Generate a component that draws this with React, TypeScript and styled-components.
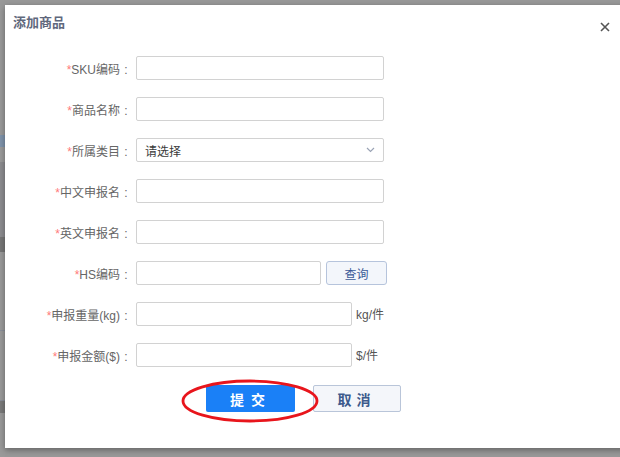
import styled, { createGlobalStyle } from 'styled-components';

const Global = createGlobalStyle`
  html, body {
    margin: 0;
    padding: 0;
    background: #989898;
    overflow: hidden;
  }
  body {
    font-family: "Liberation Sans", "Noto Sans CJK SC", sans-serif;
    font-size: 12px;
  }
`;

const Screen = styled.div`
  display: flex;
  width: 620px;
  height: 457px;
  padding-top: 5px;
  box-sizing: border-box;
  overflow: hidden;
`;

// strip of the page behind the dimmed overlay
const PageEdge = styled.div`
  width: 5px;
  flex: none;
  display: flex;
  flex-direction: column;
`;

const Band = styled.div<{ $h: number; $bg: string }>`
  height: ${(p) => p.$h}px;
  background: ${(p) => p.$bg};
  flex: none;
`;

const Modal = styled.div`
  width: 625px;
  height: 443px;
  flex: none;
  background: #fff;
  box-shadow: 0 2px 6px rgba(0, 0, 0, 0.35);
  display: flex;
  flex-direction: column;
`;

const Header = styled.div`
  height: 40px;
  display: flex;
  align-items: flex-start;
  justify-content: space-between;
  padding: 8px 0 0 8px;
  box-sizing: border-box;
  width: 615px;
`;

const Title = styled.div`
  font-size: 13px;
  font-weight: bold;
  color: #5f687c;
  font-family: "Noto Sans CJK SC", sans-serif;
  line-height: 17px;
`;

const Close = styled.button`
  border: none;
  background: none;
  padding: 0;
  margin: 8px 9px 0 0;
  width: 12px;
  height: 12px;
  display: flex;
  align-items: center;
  justify-content: center;
  cursor: pointer;
`;

const Form = styled.div`
  display: flex;
  flex-direction: column;
  gap: 17px;
  padding-top: 11px;
`;

const Row = styled.div`
  display: flex;
  align-items: center;
  height: 24px;
`;

const Label = styled.label`
  width: 127px;
  flex: none;
  margin-right: 4px;
  text-align: right;
  color: #666;
  font-size: 12px;
  white-space: nowrap;
`;

const Star = styled.span`
  color: #ff7a7a;
`;

const Colon = styled.span`
  display: inline-block;
  width: 12px;
  text-align: center;
`;

const Input = styled.input<{ $w: number }>`
  width: ${(p) => p.$w}px;
  height: 24px;
  box-sizing: border-box;
  border: 1px solid #d2d2d2;
  border-radius: 2px;
  padding: 0 8px;
  font-size: 12px;
  outline: none;
  background: #fff;
`;

const Select = styled.div`
  width: 248px;
  height: 24px;
  box-sizing: border-box;
  border: 1px solid #d2d2d2;
  border-radius: 2px;
  padding: 0 8px;
  display: flex;
  align-items: center;
  justify-content: space-between;
  color: #3a3a3a;
  font-size: 12px;
  font-family: "Noto Sans CJK SC", sans-serif;
`;

const QueryBtn = styled.button`
  margin-left: 5px;
  width: 61px;
  height: 24px;
  box-sizing: border-box;
  border: 1px solid #b6c4dc;
  border-radius: 3px;
  background: #f3f6fb;
  color: #3b5a98;
  font-size: 12px;
  font-family: "Noto Sans CJK SC", sans-serif;
  cursor: pointer;
`;

const Unit = styled.span`
  align-self: flex-start;
  margin-left: 4px;
  padding-top: 3px;
  color: #555;
  font-size: 12px;
`;

const Footer = styled.div`
  display: flex;
  gap: 18px;
  padding: 18px 0 0 201px;
`;

const SubmitWrap = styled.div`
  position: relative;
`;

const Submit = styled.button`
  width: 89px;
  height: 27px;
  border: none;
  border-radius: 2px;
  background: #1a80f7;
  color: #fff;
  font-weight: bold;
  font-size: 14px;
  letter-spacing: 7px;
  padding-left: 7px;
  font-family: "Noto Sans CJK SC", sans-serif;
  cursor: pointer;
`;

const Cancel = styled.button`
  width: 88px;
  height: 27px;
  box-sizing: border-box;
  border: 1px solid #b9c5d9;
  border-radius: 2px;
  background: #f4f6fa;
  color: #3d5a8c;
  font-weight: bold;
  font-size: 14px;
  letter-spacing: 5px;
  padding-left: 5px;
  font-family: "Noto Sans CJK SC", sans-serif;
  cursor: pointer;
`;

const Circle = styled.svg`
  position: absolute;
  left: -25px;
  top: -6px;
  pointer-events: none;
`;

type Field = { label: string; kind: 'input' | 'select' | 'query' | 'unit'; unit?: string };

const fields: Field[] = [
  { label: 'SKU编码', kind: 'input' },
  { label: '商品名称', kind: 'input' },
  { label: '所属类目', kind: 'select' },
  { label: '中文申报名', kind: 'input' },
  { label: '英文申报名', kind: 'input' },
  { label: 'HS编码', kind: 'query' },
  { label: '申报重量(kg)', kind: 'unit', unit: 'kg/件' },
  { label: '申报金额($)', kind: 'unit', unit: '$/件' },
];

const bands: [number, string][] = [
  [130, '#999999'],
  [12, '#7f93aa'],
  [15, '#9a9a9a'],
  [75, '#8c8c8f'],
  [15, '#767676'],
  [78, '#999999'],
  [1, '#8a8f99'],
  [69, '#999999'],
  [1, '#8a8f99'],
  [12, '#7a7a7a'],
  [50, '#999999'],
];

const App = () => {
  return (
    <>
      <Global />
      <Screen>
        <PageEdge>
          {bands.map(([h, bg], i) => (
            <Band key={i} $h={h} $bg={bg} />
          ))}
        </PageEdge>
        <Modal>
          <Header>
            <Title>添加商品</Title>
            <Close aria-label="close">
              <svg width="10" height="10" viewBox="0 0 10 10">
                <path d="M1 1L9 9M9 1L1 9" stroke="#555" strokeWidth="1.6" />
              </svg>
            </Close>
          </Header>

          <Form>
            {fields.map((f) => (
              <Row key={f.label}>
                <Label>
                  <Star>*</Star>
                  {f.label}
                  <Colon>:</Colon>
                </Label>
                {f.kind === 'input' && <Input $w={248} />}
                {f.kind === 'select' && (
                  <Select>
                    请选择
                    <svg width="9" height="6" viewBox="0 0 9 6">
                      <path d="M1 1L4.5 4.5L8 1" stroke="#9aa3b5" strokeWidth="1.2" fill="none" />
                    </svg>
                  </Select>
                )}
                {f.kind === 'query' && (
                  <>
                    <Input $w={185} />
                    <QueryBtn>查询</QueryBtn>
                  </>
                )}
                {f.kind === 'unit' && (
                  <>
                    <Input $w={216} />
                    <Unit>{f.unit}</Unit>
                  </>
                )}
              </Row>
            ))}
          </Form>

          <Footer>
            <SubmitWrap>
              <Submit>提交</Submit>
              <Circle width="140" height="44" viewBox="0 0 140 44">
                <ellipse cx="69" cy="22" rx="67" ry="20" fill="none" stroke="#e8151c" strokeWidth="2.8" />
              </Circle>
            </SubmitWrap>
            <Cancel>取消</Cancel>
          </Footer>
        </Modal>
      </Screen>
    </>
  );
};

export default App;
